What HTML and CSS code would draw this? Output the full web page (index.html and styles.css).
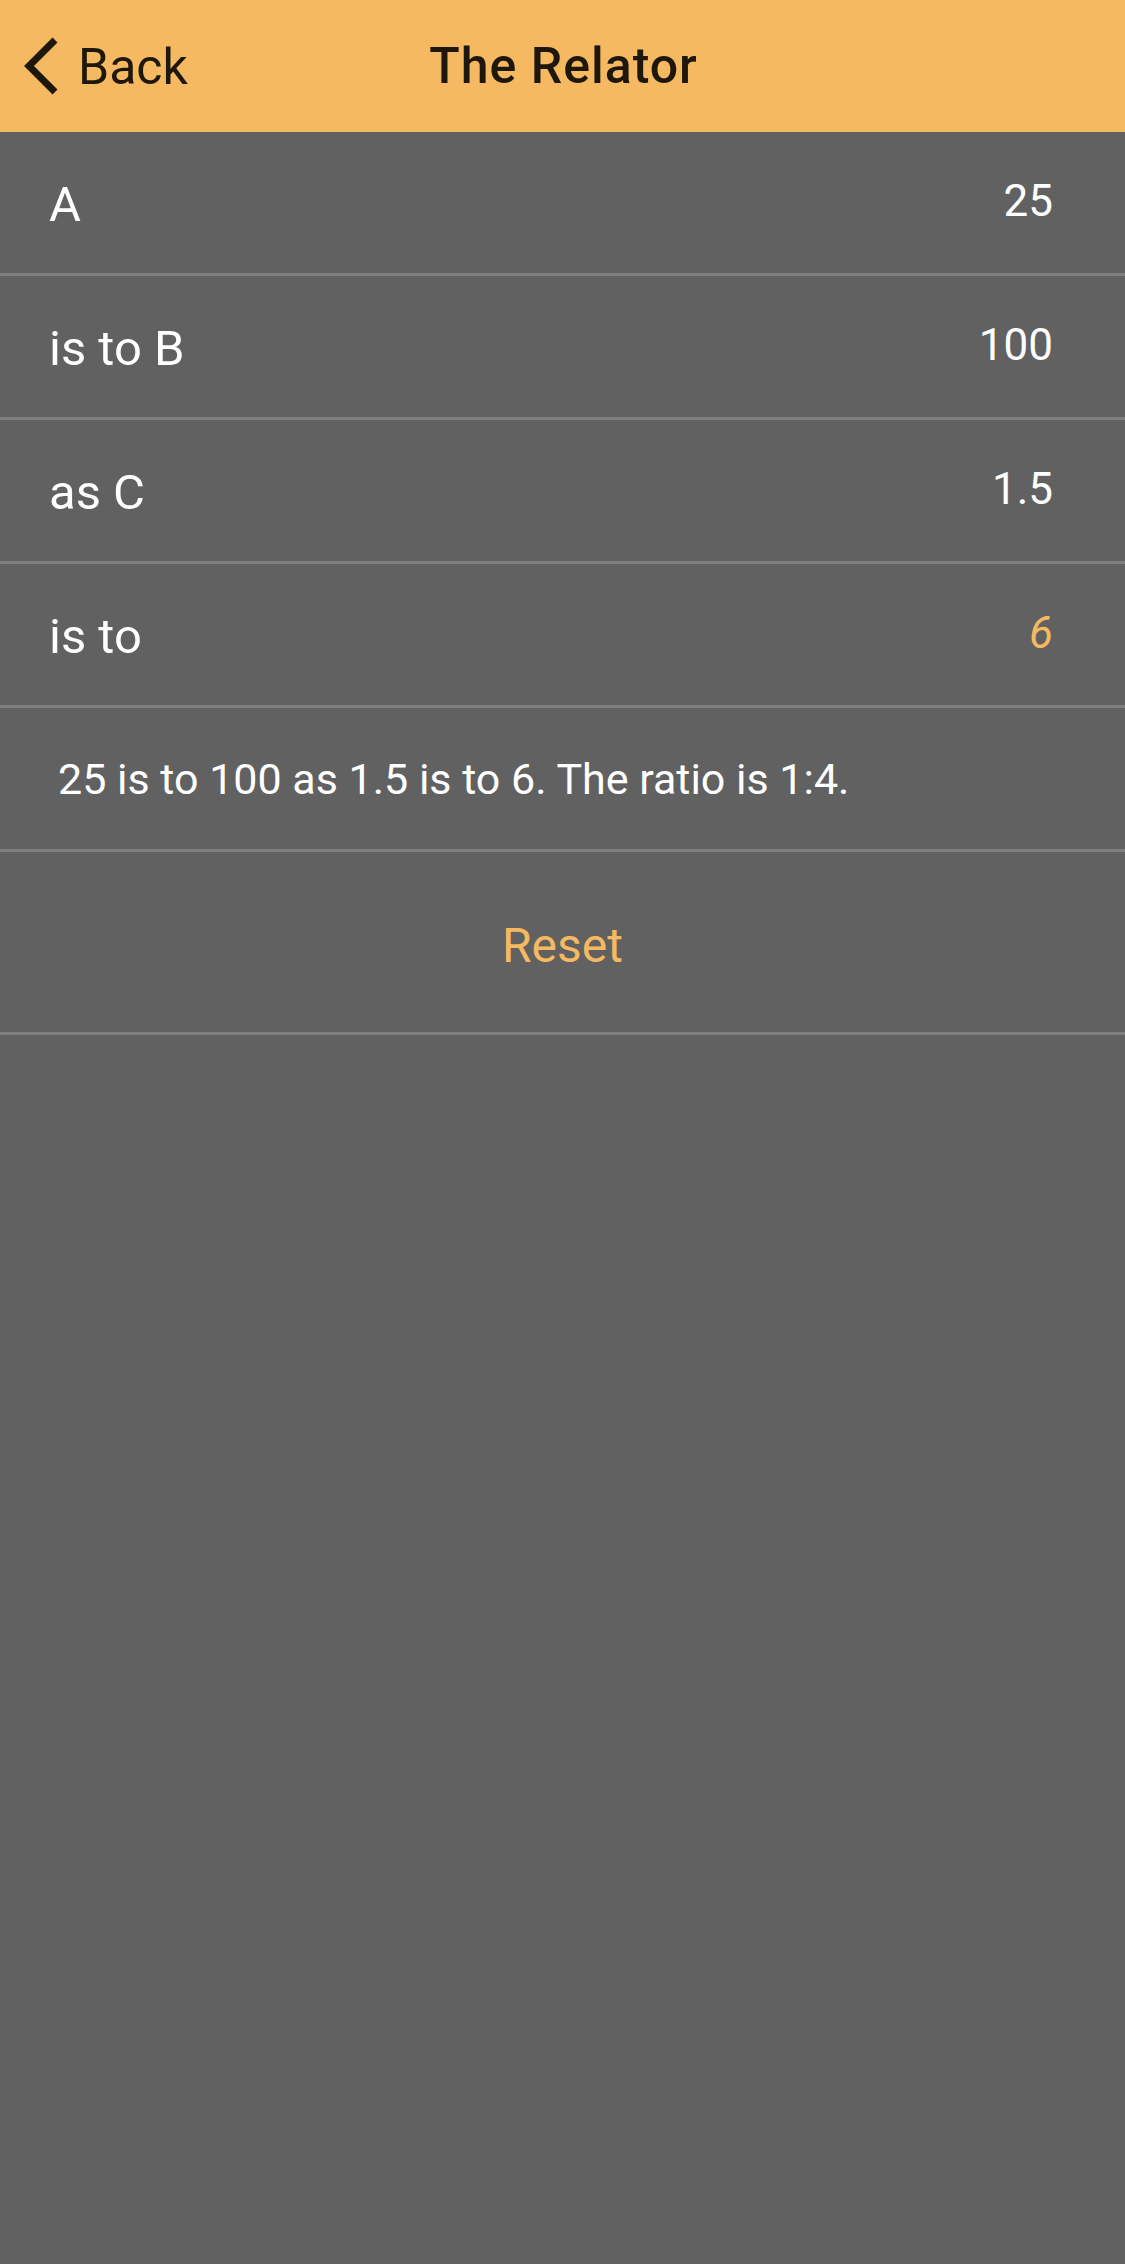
FILE: index.html
```html
<!DOCTYPE html>
<html>
    <head>
        <meta charset="utf-8">
        <title>The Relator</title>
        <link rel="stylesheet" href="styles.css">
    </head>
<body>
    <div class="nav">
        <a class="back" href="#">
            <svg class="chevron" width="40" height="60" viewBox="0 0 40 60">
                <polyline points="33,4 7,30 33,56" fill="none" stroke="#1e170b" stroke-width="7" />
            </svg>
            <span>Back</span>
        </a>
        <div class="title">The Relator</div>
    </div>
    <div class="list">
        <div class="row">
            <span class="label">A</span>
            <span class="value">25</span>
        </div>
        <div class="row">
            <span class="label">is to B</span>
            <span class="value">100</span>
        </div>
        <div class="row">
            <span class="label">as C</span>
            <span class="value">1.5</span>
        </div>
        <div class="row">
            <span class="label">is to</span>
            <span class="value result">6</span>
        </div>
        <div class="row summary">25 is to 100 as 1.5 is to 6. The ratio is 1:4.</div>
        <div class="row reset">Reset</div>
    </div>
</body>
</html>
```

FILE: styles.css
```css
html,
body {
    margin: 0;
    padding: 0;
    height: 100%;
}
body {
    background: #616161;
    font-family: "Roboto", "Liberation Sans", sans-serif;
    color: #fff;
}
.nav {
    position: relative;
    display: flex;
    align-items: center;
    justify-content: center;
    height: 132px;
    background: #f5b961;
    color: #1e170b;
}
.back {
    position: absolute;
    left: 22px;
    top: 36px;
    display: flex;
    align-items: center;
    gap: 16px;
    color: #1e170b;
    text-decoration: none;
    font-size: 50px;
}
.back span {
    margin-top: 2px;
}
.title {
    font-size: 50px;
    font-weight: 500;
    letter-spacing: 1px;
    margin-left: 2px;
}
.row {
    display: flex;
    align-items: center;
    justify-content: space-between;
    height: 141px;
    padding: 0 72px 0 49px;
    border-bottom: 3px solid #7f7f7f;
}
.label {
    font-size: 49px;
    padding-top: 4px;
}
.value {
    font-size: 44px;
    padding-bottom: 4px;
}
.result {
    color: #f5b961;
    font-style: italic;
}
.summary {
    padding-left: 58px;
    font-size: 43px;
}
.reset {
    justify-content: center;
    height: 183px;
    padding: 6px 0 0;
    box-sizing: border-box;
    color: #f5b961;
    font-size: 48px;
}
```
